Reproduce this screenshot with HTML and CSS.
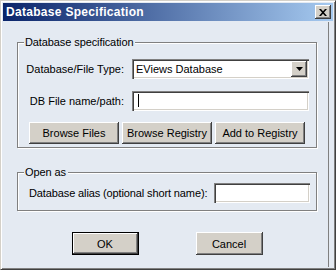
FILE: index.html
```html
<!DOCTYPE html>
<html lang="en">
<head>
    <meta charset="UTF-8">
    <title>Database Specification</title>
    <link rel="stylesheet" href="styles.css">
</head>
<body>
    <div class="window">
        <div class="titlebar">
            <span class="title">Database Specification</span>
            <span class="close-btn">
                <svg width="8" height="7" viewBox="0 0 8 7">
                    <path d="M0 0h2l2 2.2 2-2.2h2L5 3.5 8 7H6L4 4.8 2 7H0l3-3.5z" fill="#000"/>
                </svg>
            </span>
        </div>

        <div class="client">
            <div class="group group-db">
                <span class="legend">Database specification</span>
                <div class="row row-type">
                    <span class="label">Database/File Type:</span>
                    <div class="combo">
                        <span class="combo-text">EViews Database</span>
                        <span class="drop-btn">
                            <svg width="7" height="4" viewBox="0 0 7 4"><path d="M0 0h7L3.5 4z" fill="#000"/></svg>
                        </span>
                    </div>
                </div>
                <div class="row row-path">
                    <span class="label">DB File name/path:</span>
                    <div class="field field-path"><span class="caret"></span></div>
                </div>
                <div class="browse-buttons">
                    <button class="btn btn-wide">Browse Files</button>
                    <button class="btn btn-wide">Browse Registry</button>
                    <button class="btn btn-wide">Add to Registry</button>
                </div>
            </div>

            <div class="group group-open">
                <span class="legend">Open as</span>
                <div class="row row-alias">
                    <span class="label">Database alias (optional short name):</span>
                    <div class="field field-alias"></div>
                </div>
            </div>

            <div class="actions">
                <button class="btn btn-action btn-default">OK</button>
                <button class="btn btn-action">Cancel</button>
            </div>
        </div>
        <div class="edge-line"></div>
    </div>
</body>
</html>
```

FILE: styles.css
```css
body {
    margin: 0;
    padding: 0;
    font-family: "Liberation Sans", Arial, sans-serif;
    font-size: 11px;
    color: #000;
}

.window {
    position: relative;
    width: 336px;
    height: 270px;
    box-sizing: border-box;
    background: #e4eaf2;
    border-top: 1px solid #d4d0c8;
    border-left: 1px solid #d4d0c8;
    border-right: 1px solid #404040;
    border-bottom: 1px solid #404040;
    box-shadow: inset 1px 1px 0 #fff, inset -1px -1px 0 #808080;
    padding: 2px;
}

.titlebar {
    height: 18px;
    display: flex;
    align-items: center;
    justify-content: space-between;
    padding: 0 2px 0 3px;
    background: linear-gradient(to right, #0a246a 0%, #a6caf0 100%);
}

.title {
    color: #fff;
    font-weight: bold;
    font-size: 12px;
    letter-spacing: 0.3px;
}

.close-btn {
    width: 16px;
    height: 14px;
    box-sizing: border-box;
    display: flex;
    align-items: center;
    justify-content: center;
    background: #d4d0c8;
    box-shadow: inset -1px -1px 0 #404040, inset 1px 1px 0 #fff, inset -2px -2px 0 #808080;
}

.client {
    padding: 21px 16px 0 14px;
}

.group {
    position: relative;
    border: 1px solid #808080;
    box-shadow: inset 1px 1px 0 #fff, 1px 1px 0 #fff;
}

.group-db {
    height: 106px;
    box-sizing: border-box;
    padding: 16px 7px 0 0;
}

.group-open {
    margin-top: 24px;
    height: 39px;
    box-sizing: border-box;
    padding: 10px 0 0 0;
}

.legend {
    position: absolute;
    top: -7px;
    left: 6px;
    padding: 0 2px 0 1px;
    background: #e4eaf2;
    line-height: 13px;
    letter-spacing: -0.1px;
}

.row {
    display: flex;
    align-items: center;
}

.row-type .label,
.row-path .label {
    width: 106px;
    text-align: right;
    margin-right: 8px;
}

.row-path {
    margin-top: 12px;
}

.row-alias {
    padding-left: 11px;
}

.row-alias .label {
    margin-right: 7px;
    letter-spacing: -0.12px;
}

.combo,
.field {
    position: relative;
    box-sizing: border-box;
    background: #fff;
    box-shadow: inset 1px 1px 0 #808080, inset 2px 2px 0 #404040, inset -1px -1px 0 #fff, inset -2px -2px 0 #d4d0c8;
}

.combo {
    width: 177px;
    height: 20px;
    display: flex;
    align-items: center;
    justify-content: space-between;
    padding: 2px 2px 2px 4px;
}

.drop-btn {
    width: 16px;
    height: 16px;
    box-sizing: border-box;
    display: flex;
    align-items: center;
    justify-content: center;
    background: #d4d0c8;
    box-shadow: inset -1px -1px 0 #404040, inset 1px 1px 0 #fff, inset -2px -2px 0 #808080;
}

.field-path {
    width: 177px;
    height: 20px;
}

.caret {
    position: absolute;
    left: 6px;
    top: 3px;
    width: 1px;
    height: 13px;
    background: #000;
}

.field-alias {
    width: 96px;
    height: 20px;
}

.browse-buttons {
    display: flex;
    gap: 3px;
    margin-top: 11px;
    padding-left: 11px;
}

.btn {
    font-family: inherit;
    font-size: 11px;
    color: #000;
    background: #d4d0c8;
    border: none;
    padding: 0;
    margin: 0;
    box-sizing: border-box;
    box-shadow: inset -1px -1px 0 #404040, inset 1px 1px 0 #fff, inset -2px -2px 0 #808080;
}

.btn-wide {
    width: 90px;
    height: 22px;
}

.actions {
    display: flex;
    justify-content: center;
    gap: 57px;
    margin-top: 21px;
}

.btn-action {
    width: 67px;
    height: 23px;
}

.btn-default {
    border: 1px solid #000;
    box-shadow: inset -1px -1px 0 #404040, inset 1px 1px 0 #fff, inset -2px -2px 0 #808080;
}

.edge-line {
    position: absolute;
    top: 21px;
    bottom: 2px;
    right: 6px;
    width: 1px;
    background: #808080;
}
```
